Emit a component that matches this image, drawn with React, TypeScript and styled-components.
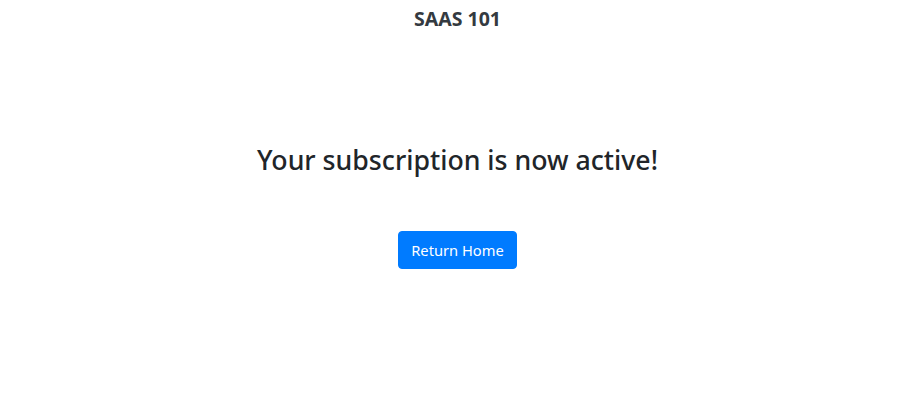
import React from 'react';
import styled, { createGlobalStyle } from 'styled-components';

const GlobalStyle = createGlobalStyle`
  html, body {
    margin: 0;
    padding: 0;
    background: #fff;
  }
  body {
    font-family: "Noto Sans", "Open Sans", sans-serif;
    color: #212529;
  }
`;

function App() {
  return (
    <>
      <GlobalStyle />
      <Page>
        <Brand>SAAS 101</Brand>
        <Main>
          <Title>Your subscription is now active!</Title>
          <HomeButton type="button">Return Home</HomeButton>
        </Main>
      </Page>
    </>
  );
}

const Page = styled.div`
  display: flex;
  flex-direction: column;
  align-items: center;
  min-height: 419px;
  padding-left: 6px;
  box-sizing: border-box;
`;

const Brand = styled.div`
  margin-top: 8px;
  font-size: 19.5px;
  line-height: 22px;
  font-weight: 700;
  color: #343a40;
`;

const Main = styled.main`
  display: flex;
  flex-direction: column;
  align-items: center;
  padding-top: 112px;
`;

const Title = styled.h2`
  margin: 0;
  font-size: 26.7px;
  line-height: 36px;
  font-weight: 500;
  color: #212529;
`;

const HomeButton = styled.button`
  margin-top: 53px;
  height: 38px;
  padding: 0 12px;
  border: 1px solid #007bff;
  border-radius: 4px;
  background: #007bff;
  color: #fff;
  font-family: inherit;
  font-size: 14.7px;
  line-height: 24px;
  cursor: pointer;
`;

export default App;
